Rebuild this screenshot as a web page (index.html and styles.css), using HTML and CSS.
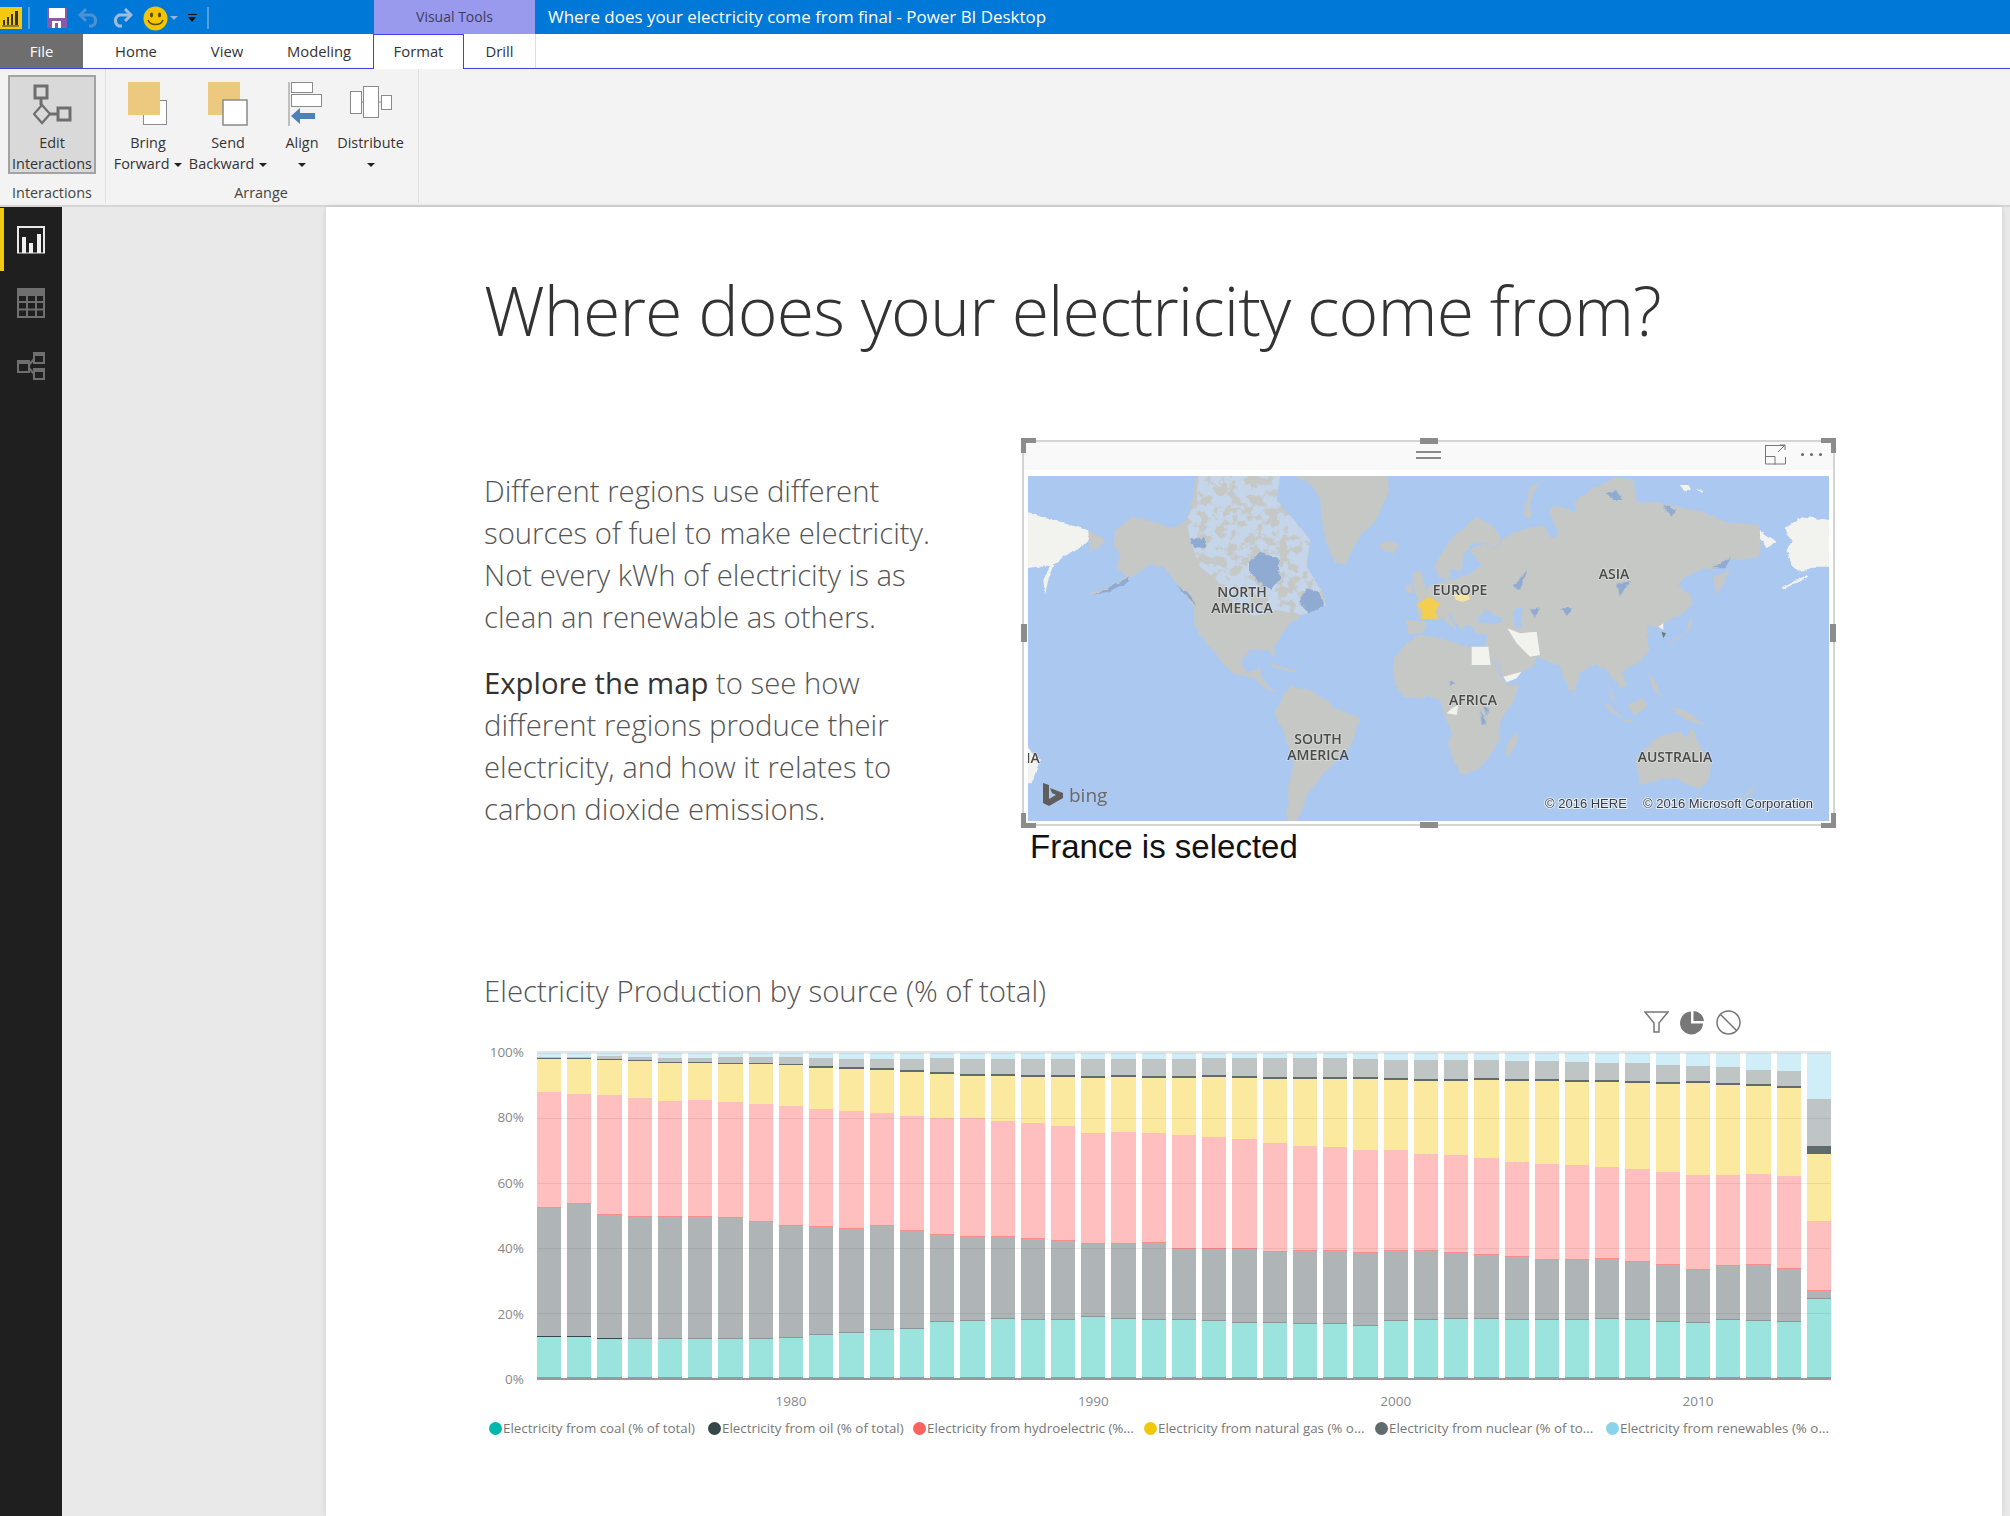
FILE: index.html
```html
<!DOCTYPE html>
<html lang="en">
<head>
  <meta charset="UTF-8" />
  <title>Where does your electricity come from final - Power BI Desktop</title>
  <link rel="stylesheet" href="styles.css">
</head>
<body>

<header class="titlebar">
  <div class="qat">
    <svg class="qat-logo" width="22" height="22" viewBox="0 0 22 22">
      <rect width="22" height="22" fill="#f2c811"/>
      <path d="M3 18V13h2v5zM7 18V10h2v8zM11 18V7h2v11zM15 18V4h3v14z" fill="#333"/>
      <path d="M2 19h17" stroke="#333"/>
    </svg>
    <span class="qat-sep"></span>
    <svg width="20" height="20" viewBox="0 0 20 20">
      <rect width="20" height="20" fill="#8a5aa8"/>
      <rect x="2" y="0" width="16" height="10" fill="#fff"/>
      <rect x="5" y="13" width="9" height="7" fill="#fff"/>
      <rect x="8" y="15" width="3" height="5" fill="#8a5aa8"/>
    </svg>
    <svg width="22" height="20" viewBox="0 0 22 20" fill="none" stroke="#4f90d2" stroke-width="3">
      <path d="M3 7h11a6 6 0 0 1 0 11h-3"/>
      <path d="M8 1L2 7l6 6"/>
    </svg>
    <svg class="qat-redo" width="22" height="20" viewBox="0 0 22 20" fill="none" stroke="#9dbcdc" stroke-width="3">
      <path d="M19 7H8a6 6 0 0 0 0 11h3"/>
      <path d="M14 1l6 6-6 6"/>
    </svg>
    <svg class="qat-smile" width="25" height="25" viewBox="0 0 25 25">
      <circle cx="12.5" cy="12.5" r="12" fill="#f5c400"/>
      <ellipse cx="8.5" cy="9" rx="1.6" ry="2.4" fill="#5a4a00"/>
      <ellipse cx="16.5" cy="9" rx="1.6" ry="2.4" fill="#5a4a00"/>
      <path d="M5 14c2 6 13 6 15 0" fill="none" stroke="#5a4a00" stroke-width="1.5"/>
    </svg>
    <span class="qat-chevron"></span>
    <span class="qat-more"></span>
    <span class="qat-sep qat-sep-end"></span>
  </div>
  <div class="context-tab">Visual Tools</div>
  <div class="window-title">Where does your electricity come from final - Power BI Desktop</div>
</header>

<nav class="tabs">
  <div class="tab tab-file">File</div>
  <div class="tab tab-home">Home</div>
  <div class="tab tab-view">View</div>
  <div class="tab tab-modeling">Modeling</div>
  <div class="tab tab-format">Format</div>
  <div class="tab tab-drill">Drill</div>
</nav>

<section class="ribbon">
  <div class="group group-interactions">
    <div class="group-buttons">
      <div class="rbtn rbtn-active">
        <svg class="rbtn-icon" width="40" height="42" viewBox="0 0 40 42" fill="none" stroke="#6e6e6e" stroke-width="3">
          <rect x="2" y="2" width="12" height="12"/>
          <path d="M8 14v7"/>
          <path d="M8 21l8 9-8 9-8-9z" stroke-width="2.2" transform="translate(1 0)"/>
          <path d="M17 30h8"/>
          <rect x="25" y="24" width="12" height="12"/>
        </svg>
        <span class="rbtn-label">Edit<br>Interactions</span>
      </div>
    </div>
    <div class="group-label">Interactions</div>
  </div>
  <div class="group group-arrange">
    <div class="group-buttons">
      <div class="rbtn rbtn-bring">
        <svg class="rbtn-icon" width="40" height="44" viewBox="0 0 40 44">
          <rect x="15.5" y="18.5" width="23" height="24" fill="#fff" stroke="#8a8a8a"/>
          <rect x="0" y="0" width="32" height="33" fill="#edc97f"/>
        </svg>
        <span class="rbtn-label">Bring<br>Forward <i class="caret"></i></span>
      </div>
      <div class="rbtn rbtn-send">
        <svg class="rbtn-icon" width="40" height="44" viewBox="0 0 40 44">
          <rect x="0" y="0" width="32" height="33" fill="#edc97f"/>
          <rect x="15" y="18" width="24" height="25" fill="#fff" stroke="#8a8a8a" stroke-width="1.5"/>
        </svg>
        <span class="rbtn-label">Send<br>Backward <i class="caret"></i></span>
      </div>
      <div class="rbtn rbtn-align">
        <svg class="rbtn-icon" width="38" height="44" viewBox="0 0 38 44">
          <path d="M5 0v44" stroke="#8a8a8a" fill="none"/>
          <rect x="7.5" y="0.5" width="21" height="10" fill="#fff" stroke="#8a8a8a"/>
          <rect x="7.5" y="12.5" width="30" height="12" fill="#fff" stroke="#8a8a8a"/>
          <path d="M7 34l9-8v5h15v6H16v5z" fill="#4d82b8"/>
        </svg>
        <span class="rbtn-label">Align<br><i class="caret"></i></span>
      </div>
      <div class="rbtn rbtn-distribute">
        <svg class="rbtn-icon" width="42" height="44" viewBox="0 0 42 44" fill="#fff" stroke="#8a8a8a">
          <path d="M11 20h3M29 20h3"/>
          <rect x="0.5" y="9.5" width="11" height="22"/>
          <rect x="13.5" y="4.5" width="15" height="31"/>
          <rect x="31.5" y="13.5" width="10" height="14"/>
        </svg>
        <span class="rbtn-label">Distribute<br><i class="caret"></i></span>
      </div>
    </div>
    <div class="group-label">Arrange</div>
  </div>
</section>

<main class="workspace">
  <aside class="sidenav">
    <div class="nav-item nav-active">
      <svg width="28" height="28" viewBox="0 0 28 28">
        <path d="M1 27V1h26v26" fill="none" stroke="#e8e8e8" stroke-width="2"/>
        <path d="M0 27h28" stroke="#e8e8e8" stroke-width="1"/>
        <path d="M5 27V11h4v16zM12 27V17h4v10zM20 27V8h4v19z" fill="#f0f0f0"/>
      </svg>
    </div>
    <div class="nav-item">
      <svg width="28" height="30" viewBox="0 0 28 30" fill="none" stroke="#6f6f6f" stroke-width="2">
        <rect x="0" y="0" width="28" height="7" fill="#6f6f6f"/>
        <rect x="1" y="7" width="26" height="22"/>
        <path d="M10 7v22M19 7v22M1 14h26M1 21.500h26"/>
      </svg>
    </div>
    <div class="nav-item">
      <svg width="28" height="28" viewBox="0 0 28 28" fill="none" stroke="#6f6f6f" stroke-width="2">
        <rect x="1" y="9" width="11" height="11"/>
        <rect x="17" y="1" width="10" height="10"/>
        <rect x="17" y="17" width="10" height="10"/>
        <path d="M1 9h11v2H1zM17 1h10v2H17zM17 17h10v2H17z" fill="#6f6f6f"/>
        <path d="M12 13l5-6M12 16l5 6"/>
      </svg>
    </div>
  </aside>

  <div class="canvas">
    <div class="page">
      <h1 class="page-title">Where does your electricity come from?</h1>

      <div class="intro">
        <div class="intro-text">
          <p>Different regions use different sources of fuel to make electricity. Not every kWh of electricity is as clean an renewable as others.</p>
          <p><strong>Explore the map</strong> to see how different regions produce their electricity, and how it relates to carbon dioxide emissions.</p>
        </div>

        <div class="map-col">
          <div class="visual">
            <span class="handle corner corner-tl"></span>
            <span class="handle corner corner-tr"></span>
            <span class="handle corner corner-bl"></span>
            <span class="handle corner corner-br"></span>
            <span class="handle mid mid-t"></span>
            <span class="handle mid mid-b"></span>
            <span class="handle mid-side mid-l"></span>
            <span class="handle mid-side mid-r"></span>

            <div class="visual-head">
              <span></span>
              <span class="drag-lines"></span>
              <div class="visual-actions">
                <svg width="21" height="21" viewBox="0 0 21 21" fill="none" stroke="#777">
                  <path d="M1 1.500h19M.5 1v19h20v-7M.5 12.500h9.500v8M13 8l7-7M15 1h5v5"/>
                </svg>
                <span class="dots"><i></i><i></i><i></i></span>
              </div>
            </div>

            <svg class="map" width="801" height="345" viewBox="0 0 801 345">
              <defs>
                <filter id="rough" x="-5%" y="-5%" width="110%" height="110%">
                  <feTurbulence type="fractalNoise" baseFrequency="0.16" numOctaves="3" seed="4"/>
                  <feDisplacementMap in="SourceGraphic" scale="4" xChannelSelector="R" yChannelSelector="G"/>
                  <feGaussianBlur stdDeviation="0.45"/>
                </filter>
                <filter id="lakes" x="0" y="0" width="100%" height="100%">
                  <feTurbulence type="fractalNoise" baseFrequency="0.1" numOctaves="3" seed="11"/>
                  <feColorMatrix values="0 0 0 0 0.56  0 0 0 0 0.67  0 0 0 0 0.82  9 0 0 0 -3.7"/>
                  <feComposite in2="SourceAlpha" operator="in"/>
                  <feGaussianBlur stdDeviation="0.5"/>
                </filter>
                <filter id="soft"><feGaussianBlur stdDeviation="0.5"/></filter>
              </defs>

              <rect width="801" height="345" fill="#abc8f1"/>

              <g filter="url(#rough)">
                <g transform="translate(-8 -6) scale(.3333)" fill="#c6c8c5">
                  <path class="land-nodata" d="M20 125L60 140 100 150 150 165 205 180 210 205 180 235 130 260 100 285 85 330 75 375 70 330 90 290 50 290 20 295Z"/>
                  <path d="M205 180L262 212 210 248Z"/>
                  <path d="M285 180L340 140 400 155 460 175 500 150 520 80 530 18 780 18 770 90 840 170 870 210 860 290 905 360 918 405 850 435 800 470 765 530 760 565 745 540 690 540 665 570 680 610 720 590 725 620 745 650 775 665 745 660 700 625 640 610 600 570 560 520 525 470 520 410 470 340 430 290 390 285 330 325 280 350 215 378 210 370 280 345 320 320 290 290 300 250 280 225Z"/>
                  <path d="M820 18L1100 18 1105 60 1090 100 1070 150 1020 200 975 285 945 275 920 220 905 150 900 80 870 40Z"/>
                  <path d="M1080 225L1110 210 1138 225 1120 248 1090 240Z"/>
                  <path d="M1190 385L1180 340 1175 310 1205 305 1210 340 1225 370Z"/>
                  <path d="M1155 350L1178 342 1180 368 1158 372Z"/>
                  <path d="M1160 450L1210 455 1220 470 1200 490 1165 490Z"/>
                  <path d="M765 730L785 680 810 650 870 660 920 690 935 710 1020 745 1000 810 990 830 940 880 890 940 860 975 835 1053 800 1053 805 960 820 880 800 810Z"/>
                  <path class="land-nodata" d="M20 830L60 870 35 940 20 940Z"/>
                  <path d="M745 578L800 595 845 607 800 603 750 588Z"/>
                </g>
                <g transform="translate(392 -6) scale(.3333)" fill="#c6c8c5">
                  <path d="M-84 600L-75 560-40 520 0 492 60 505 100 520 155 530 205 530 225 590 255 640 300 648 275 700 240 755 235 790 240 810 205 860 180 895 125 915 105 880 85 830 95 790 75 740 60 690 30 680-10 685-50 680-75 640Z"/>
                  <path d="M255 860L265 810 295 785 285 830 270 860Z"/>
                  <path d="M45 290L60 255 105 195 170 140 215 165 245 205 225 235 190 215 150 225 130 255 125 305 95 295 85 330 60 320Z"/>
                  <path d="M-10 405L-5 380 30 345 70 335 110 325 150 310 185 285 150 240 190 220 225 240 245 210 280 185 330 175 370 165 395 205 415 190 390 130 400 105 470 125 465 95 510 60 590 22 640 30 650 95 690 95 740 105 800 115 850 125 910 155 1020 165 1022 255 980 270 930 265 880 300 850 295 800 320 770 345 805 365 815 400 790 430 745 450 720 470 680 470 690 490 680 500 690 540 660 575 625 595 605 605 620 640 600 655 575 620 560 600 530 585 510 590 480 610 465 660 445 660 420 590 375 570 345 560 350 580 305 605 260 635 235 600 215 560 195 530 205 495 165 490 160 470 140 465 125 480 100 450 85 425 110 480 65 445 55 450 15 448-5 445Z"/>
                  <path d="M310 140L330 50 395 22 350 45 330 100 330 145Z"/>
                  <path d="M880 320L930 295 910 340 890 375Z"/>
                  <path d="M810 360L815 400 807 420Z"/>
                  <path d="M745 520L800 485 805 450 820 440 810 480 770 510 745 525Z"/>
                  <path d="M545 685L600 735 605 745 570 725Z"/>
                  <path d="M610 745L650 760 615 755Z"/>
                  <path d="M625 705L670 680 680 710 640 735Z"/>
                  <path d="M685 610L710 640 720 680 700 660Z"/>
                  <path d="M750 715L800 725 860 770 800 750Z"/>
                  <path d="M565 640L590 710 570 680Z"/>
                  <path d="M460 660L470 675 460 680Z"/>
                  <path d="M650 860L700 810 740 790 780 785 800 805 815 775 840 830 875 880 865 930 835 955 800 945 770 925 720 930 660 945 650 900Z"/>
                  <path d="M825 970L837 970 831 980Z"/>
                  <path d="M960 985L1010 940 980 980Z"/>
                  <path class="land-nodata" d="M1020 180L1070 215 1040 235 1020 205Z"/>
                  <path class="land-nodata" d="M1095 175L1150 140 1230 150 1230 290 1180 290 1150 305 1120 295 1100 240 1115 215Z"/>
                  <path class="land-nodata" d="M1085 355L1160 315 1165 320 1090 358Z"/>
                  <path class="land-nodata" d="M780 45L805 45 815 60 795 65Z"/>
                  <path class="land-nodata" d="M830 55L850 60 845 68Z"/>
                </g>
              </g>

              <g filter="url(#lakes)">
                <path transform="translate(-8 -6) scale(.3333)" d="M500 150L530 90 535 18 780 18 770 90 840 170 870 210 860 290 905 360 918 405 850 435 770 420 700 440 640 400 590 330 540 290 510 210Z"/>
              </g>

              <g filter="url(#rough)">
                <g transform="translate(-8 -6) scale(.3333)" fill="#8fabd2">
                  <path d="M690 275L720 245 775 265 780 325 755 360 715 335 690 305Z"/>
                  <path d="M470 345L510 375 530 405 500 380Z"/>
                  <path d="M215 375L275 350 330 320 325 335 265 365Z"/>
                  <path d="M860 355L895 365 915 405 865 430 835 395Z"/>
                  <path d="M510 205L555 205 555 235 520 230Z"/>
                </g>
                <g transform="translate(392 -6) scale(.3333)">
                  <g fill="#abc8f1">
                    <path d="M170 440L200 420 245 445 240 462 180 460Z"/>
                    <path d="M280 420L305 415 305 470 290 480 280 450Z"/>
                    <path d="M225 555L245 605 260 630 235 590Z"/>
                    <path d="M80 430L85 425 100 450 90 445Z"/>
                  </g>
                  <g fill="#8fabd2">
                    <path d="M330 420L360 415 345 445Z"/>
                    <path d="M420 415L455 415 440 435Z"/>
                    <path d="M590 340L630 335 600 378Z"/>
                    <path d="M875 295L935 260 915 295Z"/>
                    <path d="M560 70L590 60 610 90 580 90Z"/>
                    <path d="M730 105L770 120 750 140Z"/>
                    <path d="M180 720L200 760 185 765Z"/>
                    <path d="M190 710L205 710 200 740Z"/>
                    <path d="M90 630L105 640 90 650Z"/>
                    <path d="M280 350L320 300 300 360Z"/>
                  </g>
                </g>
              </g>

              <g filter="url(#soft)">
                <g transform="translate(392 -6) scale(.3333)">
                  <g fill="#f2f2ee">
                    <path d="M262 475L300 490 350 485 360 555 330 560 290 520Z"/>
                    <path d="M155 530H205L212 585H155Z"/>
                    <path d="M250 620L305 605 290 625 260 637Z"/>
                    <path d="M80 730L110 735 115 705 95 715Z"/>
                    <path d="M715 470L730 460 730 480Z"/>
                  </g>
                  <path d="M725 485L738 490 730 505Z" fill="#6f7a7a"/>
                  <path d="M-8 405L25 380 60 400 45 425 55 445 5 448 8 425Z" fill="#f4ce4f"/>
                  <path d="M100 372L145 372 150 388 128 396 108 390Z" fill="#f1e3a2"/>
                </g>
              </g>

              <g class="map-labels">
                <text x="214" y="121">NORTH</text>
                <text x="214" y="137">AMERICA</text>
                <text x="290" y="268">SOUTH</text>
                <text x="290" y="284">AMERICA</text>
                <text x="432" y="119">EUROPE</text>
                <text x="586" y="103">ASIA</text>
                <text x="445" y="229">AFRICA</text>
                <text x="647" y="286">AUSTRALIA</text>
                <text x="5" y="287">IA</text>
              </g>

              <path d="M15 307l6 2v14l7-4-4-2-2-5 13 5v5l-14 8-6-3z" fill="#5e5e5e"/>
              <text class="map-bing" x="41" y="326">bing</text>
              <text class="map-credit" x="517" y="332">© 2016 HERE</text>
              <text class="map-credit" x="615" y="332">© 2016 Microsoft Corporation</text>
            </svg>
          </div>
          <div class="map-caption">France is selected</div>
        </div>
      </div>

      <section class="chart">
        <h2 class="chart-title">Electricity Production by source (% of total)</h2>

        <div class="chart-tools">
          <svg width="25" height="24" viewBox="0 0 25 24" fill="none" stroke="#777" stroke-width="1.500">
            <path d="M1 2h23l-9 11v9h-5v-9z"/>
          </svg>
          <svg width="25" height="25" viewBox="0 0 25 25">
            <path d="M11 1.500v12h12A11.500 11.500 0 1 1 11 1.500z" fill="#777"/>
            <path d="M13.500 1a11 11 0 0 1 10.500 10h-6l-4.500 0z" fill="#777"/>
          </svg>
          <svg width="25" height="25" viewBox="0 0 25 25" fill="none" stroke="#777" stroke-width="1.500">
            <circle cx="12.500" cy="12.500" r="11.500"/>
            <path d="M4.500 4.500l16 16"/>
          </svg>
        </div>

        <div class="plot">
          <div class="y-axis">
            <span>0%</span><span>20%</span><span>40%</span><span>60%</span><span>80%</span><span>100%</span>
          </div>
          <div class="bars" id="bars"></div>
        </div>
        <div class="x-axis" id="xAxis"></div>

        <div class="legend">
          <div class="legend-item"><i class="dot dot-coal"></i>Electricity from coal (% of total)</div>
          <div class="legend-item"><i class="dot dot-oil"></i>Electricity from oil (% of total)</div>
          <div class="legend-item"><i class="dot dot-hydro"></i>Electricity from hydroelectric (%...</div>
          <div class="legend-item"><i class="dot dot-gas"></i>Electricity from natural gas (% o...</div>
          <div class="legend-item"><i class="dot dot-nuclear"></i>Electricity from nuclear (% of to...</div>
          <div class="legend-item"><i class="dot dot-renew"></i>Electricity from renewables (% o...</div>
        </div>
      </section>
    </div>
  </div>
</main>

<script src="chart.js"></script>
</body>
</html>
```

FILE: styles.css
```css
* {
  box-sizing: border-box;
}

html, body {
  height: 100%;
}

body {
  margin: 0;
  display: flex;
  flex-direction: column;
  overflow: hidden;
  font-family: 'Open Sans', sans-serif;
  color: #333;
  background-color: #f3f3f3;
}

/* title bar */
.titlebar {
  display: flex;
  height: 34px;
  flex: none;
  background-color: #0078d7;
}

.qat {
  display: flex;
  align-items: center;
  width: 374px;
  padding-top: 2px;
}

.qat > svg {
  flex: none;
  margin-right: 11px;
}

.qat > .qat-logo {
  margin-right: 6px;
}

.qat-sep {
  width: 2px;
  height: 22px;
  margin-right: 17px;
  background-color: #4d9fe0;
}

.qat-sep-end {
  margin-left: 10px;
  margin-right: 0;
}

.qat > .qat-redo {
  margin-right: 10px;
}

.qat > .qat-smile {
  margin-right: 2px;
}

.qat-chevron {
  width: 0;
  height: 0;
  margin-right: 10px;
  border-left: 4px solid transparent;
  border-right: 4px solid transparent;
  border-top: 4px solid #8fb6d8;
}

.qat-more {
  position: relative;
  width: 9px;
  height: 8px;
  border-top: 1px solid #111;
}

.qat-more::after {
  content: "";
  position: absolute;
  top: 2px;
  left: 0;
  border-left: 4.500px solid transparent;
  border-right: 4.500px solid transparent;
  border-top: 5px solid #111;
}

.context-tab {
  width: 161px;
  line-height: 34px;
  text-align: center;
  font-size: 14px;
  color: #3d3d5c;
  background-color: #9999ee;
}

.window-title {
  padding-left: 13px;
  line-height: 34px;
  font-size: 16.950px;
  color: #fff;
}

/* ribbon tabs */
.tabs {
  display: flex;
  flex: none;
  height: 35px;
  background-color: #fff;
  border-bottom: 1px solid #4040e4;
}

.tab {
  line-height: 35px;
  text-align: center;
  font-size: 14.800px;
  color: #333;
}

.tab-file {
  width: 83px;
  color: #fff;
  background-color: #6e6e6e;
}

.tab-home { width: 106px; }
.tab-view { width: 76px; }
.tab-modeling { width: 108px; }

.tab-format {
  width: 91px;
  height: 35px;
  line-height: 33px;
  background-color: #fff;
  border: 1px solid #4040e4;
  border-bottom: 0;
}

.tab-drill {
  width: 72px;
  border-right: 1px solid #ddd;
}

/* ribbon */
.ribbon {
  display: flex;
  flex: none;
  height: 138px;
  background-color: #f3f3f3;
  border-bottom: 2px solid #d6d6d6;
}

.group {
  display: flex;
  flex-direction: column;
  height: 134px;
  border-right: 1px solid #e0e0e0;
}

.group-interactions {
  width: 106px;
  padding: 6px 9px 0 8px;
}

.group-arrange {
  width: 313px;
  padding: 6px 2px 0 0;
}

.group-buttons {
  display: flex;
  height: 99px;
}

.group-label {
  margin-top: 9px;
  line-height: 20px;
  text-align: center;
  font-size: 14.400px;
  color: #444;
}

.rbtn {
  display: flex;
  flex-direction: column;
  align-items: center;
  flex: none;
  font-size: 14.400px;
  line-height: 21px;
  text-align: center;
  color: #333;
}

.rbtn-label {
  white-space: nowrap;
}

.rbtn-icon {
  display: block;
  flex: none;
  height: 44px;
  margin-top: 7px;
  margin-bottom: 6px;
}

.rbtn-active {
  width: 88px;
  background-color: #d9d9d9;
  border: 2px solid #a3a3a3;
}

.rbtn-active .rbtn-icon {
  margin-top: 6px;
  margin-bottom: 5px;
  margin-left: 2px;
}

.rbtn-bring { width: 84px; }
.rbtn-send { width: 76px; }
.rbtn-align { width: 72px; }
.rbtn-distribute { width: 65px; }

.rbtn-align .rbtn-icon {
  margin-left: 2px;
}

.caret {
  display: inline-block;
  vertical-align: middle;
  margin-left: 1px;
  border-left: 4px solid transparent;
  border-right: 4px solid transparent;
  border-top: 4px solid #222;
}

/* left nav + canvas */
.workspace {
  display: flex;
  flex: 1;
  min-height: 0;
}

.sidenav {
  flex: none;
  width: 62px;
  padding-top: 1px;
  background-color: #1f1f1f;
}

.nav-item {
  display: flex;
  justify-content: center;
  align-items: center;
  height: 63px;
}

.nav-active {
  border-left: 4px solid #f2c811;
  padding-right: 4px;
}

.canvas {
  display: flex;
  flex: 1;
  padding-left: 264px;
  padding-right: 8px;
  background-color: #e9e9e9;
}

.page {
  flex: 1;
  padding: 48px 0 0 158px;
  background-color: #fff;
  box-shadow: 0 0 6px rgba(0, 0, 0, 0.12);
}

.page-title {
  margin: 0;
  line-height: 110px;
  font-size: 68px;
  font-weight: 300;
  letter-spacing: -0.9px;
  color: #333;
}

.intro {
  display: flex;
  margin-top: 75px;
}

.intro-text {
  width: 538px;
  padding: 30px 78px 0 0;
  font-size: 29.300px;
  font-weight: 300;
  line-height: 42px;
  color: #555;
}

.intro-text p {
  margin: 0 0 24px;
}

.intro-text strong {
  font-weight: 400;
  color: #333;
}

/* map visual */
.map-col {
  width: 813px;
}

.visual {
  position: relative;
  width: 813px;
  padding: 0 4px 3px;
  background-color: #fff;
  border: 2px solid #d4d4d4;
}

.visual-head {
  display: grid;
  grid-template-columns: 1fr auto 1fr;
  align-items: center;
  height: 28px;
  margin: 0 -4px 6px;
  padding-bottom: 3px;
  background-color: #f9f9f9;
}

.drag-lines {
  width: 25px;
  height: 8px;
  border-top: 2px solid #8a8a8a;
  border-bottom: 2px solid #8a8a8a;
}

.visual-actions {
  display: flex;
  justify-content: flex-end;
  align-items: center;
  gap: 15px;
  padding-right: 11px;
}

.dots {
  display: flex;
  gap: 6px;
}

.dots i {
  width: 3px;
  height: 3px;
  border-radius: 50%;
  background-color: #666;
}

.map {
  display: block;
}

.land-nodata {
  fill: #f2f2ee;
}

.map-labels text {
  text-anchor: middle;
  font-size: 14px;
  font-weight: 600;
  fill: #4a4a4a;
  stroke: rgba(255, 255, 255, 0.25);
  stroke-width: 2px;
  paint-order: stroke;
}

.map-bing {
  font-size: 19px;
  fill: #6a6a6a;
}

.map-credit {
  font-family: 'Liberation Sans', sans-serif;
  font-size: 13px;
  fill: #3a3a3a;
  stroke: rgba(255, 255, 255, 0.7);
  stroke-width: 2px;
  paint-order: stroke;
}

.handle {
  position: absolute;
  background-color: #8c8c8c;
}

.corner {
  width: 15px;
  height: 15px;
  background-color: transparent;
  border: 0 solid #8c8c8c;
}

.corner-tl { top: -4px; left: -3px; border-width: 5px 0 0 5px; }
.corner-tr { top: -4px; right: -3px; border-width: 5px 5px 0 0; }
.corner-bl { bottom: -4px; left: -3px; border-width: 0 0 5px 5px; }
.corner-br { bottom: -4px; right: -3px; border-width: 0 5px 5px 0; }

.mid {
  left: 50%;
  width: 18px;
  height: 6px;
  margin-left: -9px;
}

.mid-t { top: -4px; }
.mid-b { bottom: -4px; }

.mid-side {
  top: 50%;
  width: 6px;
  height: 18px;
  margin-top: -9px;
}

.mid-l { left: -3px; }
.mid-r { right: -3px; }

.map-caption {
  margin-top: 2px;
  padding-left: 8px;
  font-family: 'Liberation Sans', sans-serif;
  font-size: 33px;
  line-height: 38px;
  color: #111;
}

/* chart */
.chart {
  width: 1347px;
  margin-top: 104px;
}

.chart-title {
  margin: 0;
  line-height: 42px;
  font-size: 29.400px;
  font-weight: 300;
  color: #555;
}

.chart-tools {
  display: flex;
  justify-content: flex-end;
  gap: 11px;
  height: 25px;
  margin-top: -2px;
  padding-right: 90px;
}

.plot {
  display: flex;
  height: 327px;
  margin-top: 17px;
}

.y-axis {
  display: flex;
  flex-direction: column-reverse;
  justify-content: space-between;
  width: 53px;
  padding-right: 13px;
  text-align: right;
  font-size: 13.500px;
  color: #888;
}

.y-axis span {
  height: 0;
  line-height: 0;
}

.bars {
  position: relative;
  display: flex;
  flex: 1;
  gap: 6px;
  border-top: 2px solid #e4e4e4;
  border-bottom: 2px solid #999;
  box-sizing: content-box;
  margin: -1px 0 -1px;
}

.bars::after {
  content: "";
  position: absolute;
  inset: 0;
  background: repeating-linear-gradient(to top, transparent 0, transparent calc(20% - 1px), rgba(0, 0, 0, 0.07) calc(20% - 1px), rgba(0, 0, 0, 0.07) 20%);
}

.bar {
  display: flex;
  flex-direction: column-reverse;
  flex: 1;
}

.seg {
  border-bottom: 0 solid transparent;
}

.seg-coal { background-color: #9be3dd; border-bottom-color: #3cc4b9; }
.seg-oil { background-color: #afb5b6; border-bottom-color: #8d9596; }
.seg-oil-strong { border-bottom-color: #374649; }
.seg-hydro { background-color: #febfbe; border-bottom-color: #f88f8c; }
.seg-gas { background-color: #fae99f; }
.seg-nuclear { background-color: #bfc4c5; border-bottom-color: #5f6b6d; }
.seg-renew { background-color: #d0eef7; flex: 1; }

.x-axis {
  display: flex;
  gap: 6px;
  height: 16px;
  margin-top: 14px;
  margin-left: 53px;
  font-size: 13.500px;
  line-height: 16px;
  color: #888;
}

.x-axis span {
  display: flex;
  justify-content: center;
  flex: 1;
  min-width: 0;
  white-space: nowrap;
}

.legend {
  display: grid;
  grid-template-columns: 219px 205px 231px 231px 231px auto;
  margin-top: 11px;
  margin-left: 5px;
}

.legend-item {
  display: flex;
  align-items: center;
  white-space: nowrap;
  font-size: 13.350px;
  line-height: 16px;
  color: #777;
}

.dot {
  flex: none;
  width: 13px;
  height: 13px;
  margin-right: 1px;
  border-radius: 50%;
}

.dot-coal { background-color: #01b8aa; }
.dot-oil { background-color: #374649; }
.dot-hydro { background-color: #fd625e; }
.dot-gas { background-color: #f2c80f; }
.dot-nuclear { background-color: #5f6b6d; }
.dot-renew { background-color: #8ad4eb; }
```

FILE: chart.js
```js
// cumulative tops per year (% of total): coal, oil, hydro, gas, nuclear
const years = [
  [12.7, 52.4, 88.0, 98.3, 98.7], [12.6, 53.4, 87.5, 98.3, 98.9], [12.1, 50.3, 87.0, 98.0, 99.0],
  [12.1, 49.6, 86.3, 97.7, 98.9], [12.0, 49.4, 85.1, 97.0, 98.5], [12.0, 49.6, 85.4, 97.0, 98.5],
  [12.0, 49.1, 84.8, 96.6, 98.7], [12.0, 48.1, 84.2, 96.7, 98.8], [12.4, 46.9, 83.7, 96.4, 98.7],
  [13.2, 46.5, 82.9, 95.5, 98.4], [13.8, 46.0, 82.2, 95.2, 98.2], [14.7, 46.8, 81.7, 94.8, 98.3],
  [15.2, 45.1, 80.7, 94.1, 98.2], [17.2, 43.9, 80.0, 93.6, 98.5], [17.4, 43.5, 80.0, 93.0, 98.2],
  [18.2, 43.5, 79.1, 92.9, 98.3], [17.7, 42.7, 78.5, 92.7, 98.3], [18.0, 42.3, 77.6, 92.6, 98.2],
  [18.8, 41.3, 75.3, 92.4, 98.2], [18.3, 41.3, 75.8, 92.5, 98.2], [18.0, 41.4, 75.4, 92.4, 98.2],
  [17.9, 39.8, 74.8, 92.4, 98.3], [17.6, 39.6, 74.2, 92.5, 98.4], [17.0, 39.8, 73.4, 92.4, 98.4],
  [16.8, 38.7, 72.4, 92.0, 98.5], [16.7, 39.2, 71.5, 92.1, 98.4], [16.5, 39.2, 71.2, 92.0, 98.4],
  [16.0, 38.6, 70.3, 91.9, 98.2], [17.5, 39.2, 70.3, 91.6, 97.9], [17.9, 39.0, 69.0, 91.5, 97.9],
  [18.1, 38.4, 68.5, 91.5, 97.9], [18.2, 37.7, 67.7, 91.8, 97.8], [17.7, 37.1, 66.6, 91.4, 97.6],
  [17.7, 36.2, 65.9, 91.3, 97.5], [18.0, 36.3, 65.4, 91.0, 97.3], [18.2, 36.6, 65.0, 91.0, 97.0],
  [17.9, 35.8, 64.4, 90.8, 96.8], [17.2, 34.9, 63.5, 90.5, 96.4], [16.9, 33.2, 62.6, 90.8, 96.1],
  [17.8, 34.4, 62.6, 90.3, 95.6], [17.6, 34.8, 62.8, 89.9, 94.9], [17.3, 33.5, 62.1, 89.3, 94.4],
  [24.4, 26.9, 48.2, 69.0, 86.0]
];

const firstYear = 1972;
const bars = document.getElementById('bars');
const xAxis = document.getElementById('xAxis');

function nuclearLine(i) {
  if (i === 42) return 8;
  if (i < 9) return 1;
  return 2;
}

years.forEach((tops, i) => {
  const [coal, oil, hydro, gas, nuclear] = tops;
  const bar = document.createElement('div');
  bar.className = 'bar';
  bar.innerHTML = `
    <div class="seg seg-coal" style="height:${coal}%;border-bottom-width:1px"></div>
    <div class="seg seg-oil ${i < 3 ? 'seg-oil-strong' : ''}" style="height:${(oil - coal).toFixed(1)}%;border-bottom-width:1px"></div>
    <div class="seg seg-hydro" style="height:${(hydro - oil).toFixed(1)}%;border-bottom-width:1px"></div>
    <div class="seg seg-gas" style="height:${(gas - hydro).toFixed(1)}%"></div>
    <div class="seg seg-nuclear" style="height:${(nuclear - gas).toFixed(1)}%;border-bottom-width:${nuclearLine(i)}px"></div>
    <div class="seg seg-renew"></div>
  `;
  bars.appendChild(bar);

  const year = firstYear + i;
  const tick = document.createElement('span');
  tick.textContent = year % 10 === 0 ? year : '';
  xAxis.appendChild(tick);
});
```
